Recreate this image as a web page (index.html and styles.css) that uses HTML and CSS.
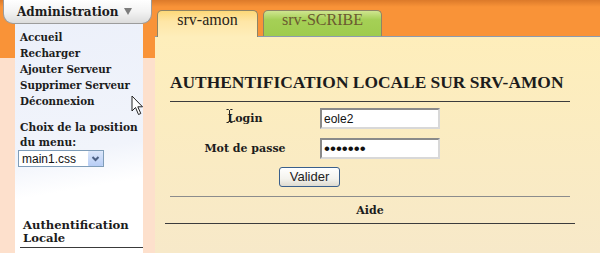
FILE: index.html
```html
<!DOCTYPE html>
<html lang="fr">
<head>
    <meta charset="UTF-8">
    <title>EAD - Authentification locale</title>
    <link rel="stylesheet" href="styles.css">
</head>
<body>
    <div class="page">
        <div class="sidebar">
            <div class="menu-btn">
                <span>Administration</span>
                <span class="menu-arrow"></span>
            </div>
            <div class="menu-panel">
                <ul class="menu-links">
                    <li><a href="#">Accueil</a></li>
                    <li><a href="#">Recharger</a></li>
                    <li><a href="#">Ajouter Serveur</a></li>
                    <li><a href="#">Supprimer Serveur</a></li>
                    <li><a href="#">Déconnexion</a></li>
                </ul>
                <div class="menu-choice">
                    <label for="cssChoice">Choix de la position du menu:</label>
                    <span class="select-wrap">
                        <select id="cssChoice" class="css-select">
                            <option>main1.css</option>
                        </select>
                    </span>
                </div>
                <div class="menu-section">Authentification Locale</div>
            </div>
        </div>

        <div class="main">
            <div class="tabs">
                <a class="tab tab-active" href="#">srv-amon</a>
                <a class="tab tab-other" href="#">srv-SCRIBE</a>
            </div>
            <div class="content">
                <h2 class="title">AUTHENTIFICATION LOCALE SUR SRV-AMON</h2>
                <form class="login-form">
                    <div class="form-row">
                        <label for="login">Login</label>
                        <input id="login" type="text" value="eole2">
                    </div>
                    <div class="form-row">
                        <label for="pass">Mot de passe</label>
                        <input id="pass" class="pass" type="password" value="eole2ad">
                    </div>
                    <div class="form-actions">
                        <button type="button" class="submit-btn">Valider</button>
                    </div>
                </form>
                <div class="help-block">
                    <h3 class="help">Aide</h3>
                </div>
            </div>
        </div>

        <!-- mouse pointers caught in the screenshot -->
        <svg class="pointer" width="14" height="22" viewBox="0 0 14 22">
            <path d="M1 1 L1 16 L4.5 12.5 L7.5 19.5 L9.8 18.5 L6.8 11.8 L11.5 11.8 Z" fill="#fff" stroke="#222" stroke-width="1"/>
        </svg>
        <svg class="ibeam" width="7" height="14" viewBox="0 0 7 14">
            <path d="M0.5 0.5 H2.5 L3.5 1.5 L4.5 0.5 H6.5 M3.5 1.5 V12.5 M0.5 13.5 H2.5 L3.5 12.5 L4.5 13.5 H6.5" fill="none" stroke="#222" stroke-width="1"/>
        </svg>
    </div>
</body>
</html>
```

FILE: styles.css
```css
        body {
            margin: 0;
            padding: 0;
            font-family: "DejaVu Serif", serif;
            color: #1c1c1c;
            overflow: hidden;
        }

        .page {
            position: relative;
            display: flex;
            height: 253px;
        }

        /* left menu */
        .sidebar {
            width: 155px;
            flex-shrink: 0;
            display: flex;
            flex-direction: column;
            background: linear-gradient(#dc7a2a 0, #f99338 7px, #f99338 58px, #fde0cc 58px);
        }

        .menu-btn {
            position: relative;
            z-index: 1;
            display: flex;
            justify-content: space-between;
            align-items: center;
            height: 23px;
            margin: 0 3px;
            padding: 0 19px 0 13px;
            border: 1px solid #9c9c9c;
            border-top: none;
            border-radius: 0 0 10px 10px;
            background: linear-gradient(#ffffff, #f3f3f3 50%, #dcdcdc);
            font-size: 12px;
            font-weight: bold;
        }

        .menu-arrow {
            width: 0;
            height: 0;
            border-left: 4px solid transparent;
            border-right: 4px solid transparent;
            border-top: 7px solid #7c7c7c;
        }

        .menu-panel {
            flex: 1;
            width: 123px;
            margin-left: 15px;
            padding: 5px 0 0 5px;
            background: linear-gradient(170deg, #ecf0fa 0, #f1f4fb 55%, #ffffff 70%);
            font-size: 10.3px;
            font-weight: bold;
        }

        .menu-links {
            list-style: none;
            margin: 0;
            padding: 0;
        }

        .menu-links li {
            line-height: 16px;
        }

        .menu-links a {
            color: #1c1c1c;
            text-decoration: none;
        }

        .menu-choice {
            margin-top: 11px;
        }

        .menu-choice label {
            display: block;
            width: 123px;
            font-size: 10.6px;
            line-height: 15px;
        }

        .select-wrap {
            position: relative;
            display: block;
            width: 86px;
            margin-left: -2px;
        }

        .css-select {
            display: block;
            box-sizing: border-box;
            width: 86px;
            height: 17px;
            margin: 0;
            padding: 0 0 0 3px;
            -webkit-appearance: none;
            appearance: none;
            font-family: "Liberation Sans", sans-serif;
            font-size: 12px;
            color: #111;
            border: 1px solid #7f9db9;
            border-radius: 0;
            background: #fff;
        }

        .select-wrap::after {
            content: "";
            position: absolute;
            right: 1px;
            top: 1px;
            width: 15px;
            height: 15px;
            border-radius: 1px;
            background:
                url("data:image/svg+xml,%3Csvg xmlns='http://www.w3.org/2000/svg' width='15' height='15'%3E%3Cpath d='M4.5 6 L7.5 9 L10.5 6' fill='none' stroke='%234d6185' stroke-width='2'/%3E%3C/svg%3E") center no-repeat,
                linear-gradient(#dce7fb, #b7cdf5);
            pointer-events: none;
        }

        .menu-section {
            margin-top: 52px;
            padding: 0 0 2px 3px;
            font-size: 11.6px;
            line-height: 13px;
            border-bottom: 1px solid #3a3a3a;
        }

        /* main area */
        .main {
            flex: 1;
            display: flex;
            flex-direction: column;
        }

        .tabs {
            display: flex;
            align-items: flex-end;
            gap: 5px;
            height: 36px;
            padding-left: 2px;
            border-bottom: 1px solid #8c9bb0;
            background: linear-gradient(#dc7a2a 0, #f99338 7px);
        }

        .tab {
            height: 25px;
            border: 1px solid #8f8464;
            border-bottom: none;
            border-radius: 5px 5px 0 0;
            font-family: "Liberation Serif", serif;
            font-size: 16px;
            line-height: 18px;
            text-align: center;
            text-decoration: none;
        }

        .tab-active {
            width: 99px;
            height: 26px;
            margin-bottom: -1px;
            color: #2a2418;
            background: linear-gradient(#fdd878, #fee6a6 40%, #feeebb);
        }

        .tab-other {
            width: 117px;
            color: #6b5a30;
            background: linear-gradient(#cfe58f, #a5d056 35%, #9fcb4e);
        }

        .content {
            flex: 1;
            padding: 35px 30px 0 15px;
            background: linear-gradient(#feeebb, #f7e9c9);
        }

        .title {
            margin: 0;
            padding-bottom: 9px;
            border-bottom: 1px solid #3c3c3c;
            font-family: "Liberation Serif", serif;
            font-size: 17.4px;
            line-height: 20px;
            white-space: nowrap;
        }

        .login-form {
            margin: 6px 0 0;
        }

        .form-row {
            display: grid;
            grid-template-columns: 150px 120px;
            align-items: center;
            margin-bottom: 9px;
        }

        .form-row label {
            text-align: center;
            font-size: 11px;
            font-weight: bold;
        }

        .form-row input {
            box-sizing: border-box;
            width: 120px;
            height: 21px;
            margin: 0;
            padding: 1px 2px;
            border: 2px solid;
            border-color: #8a8a8a #d8d8d8 #d8d8d8 #8a8a8a;
            background: #fff;
            font-family: "Liberation Sans", sans-serif;
            font-size: 12px;
            color: #111;
        }

        .form-row .pass {
            font-size: 17px;
            letter-spacing: 0;
        }

        .form-actions {
            margin-top: -2px;
            padding-left: 109px;
        }

        .submit-btn {
            width: 61px;
            height: 20px;
            padding: 0;
            border: 1px solid #3a5f8c;
            border-radius: 3px;
            background: linear-gradient(#ffffff, #f4f3ee 60%, #dedbd0);
            font-family: "Liberation Sans", sans-serif;
            font-size: 13px;
            color: #222;
        }

        .help-block {
            margin: 9px -5px 0;
            border-bottom: 1px solid #3c3c3c;
        }

        .help {
            margin: 0 5px;
            padding: 7px 0 5px;
            border-top: 1px solid #8c8c8c;
            font-size: 11px;
            line-height: 14px;
            text-align: center;
        }

        .pointer {
            position: absolute;
            left: 131px;
            top: 95px;
        }

        .ibeam {
            position: absolute;
            left: 226px;
            top: 109px;
        }
```
